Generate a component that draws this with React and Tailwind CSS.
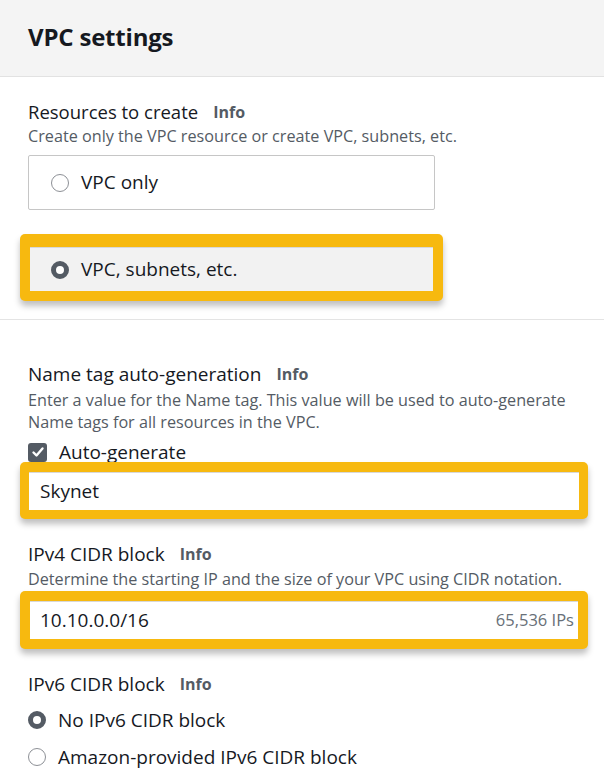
import React from "react";

const Info = () => (
  <span className="ml-[15px] text-[16px] font-bold text-[#545b64]">Info</span>
);

const Radio = ({ checked }) =>
  checked ? (
    <span className="inline-block w-[18px] h-[18px] rounded-full border-[5px] border-[#545b64] bg-white flex-shrink-0" />
  ) : (
    <span className="inline-block w-[18px] h-[18px] rounded-full border border-[#8d9096] bg-white flex-shrink-0" />
  );

const Highlight = ({ className, children }) => (
  <div
    className={`rounded-[5px] bg-[#f7b90f] shadow-[0_5px_6px_rgba(0,0,0,0.25)] ${className}`}
  >
    {children}
  </div>
);

export default function App() {
  return (
    <div
      className="w-[604px] h-[777px] bg-white overflow-hidden text-[#16191f]"
      style={{ fontFamily: '"Open Sans", "Noto Sans", sans-serif' }}
    >
      {/* Header */}
      <div className="h-[77px] bg-[#f4f4f4] border-b border-[#e2e2e2] flex items-center pl-[28px] pb-[2px]">
        <h2 className="text-[24px] font-bold tracking-[-0.2px]">VPC settings</h2>
      </div>

      {/* Resources to create */}
      <div className="pl-[28px] pt-[24px]">
        <div className="h-[22px] flex items-center text-[18.5px]">
          Resources to create <Info />
        </div>
        <p className="mt-[3px] text-[16.2px] leading-[20px] text-[#545b64] whitespace-nowrap">
          Create only the VPC resource or create VPC, subnets, etc.
        </p>
        <div className="mt-[9px] w-[407px] h-[55px] border border-[#c6c6c6] rounded-[2px] flex items-center pl-[22px] gap-[12px] text-[19px]">
          <Radio />
          VPC only
        </div>
      </div>
      <div className="pl-[20px] mt-[24px]">
        <Highlight className="w-[423px] h-[67px] pt-[13px] pb-[10px] px-[10px]">
          <div className="h-full bg-[#f2f2f2] flex items-center pl-[21px] gap-[12px] text-[19px] border-t border-[#d8d8d8]">
            <Radio checked />
            VPC, subnets, etc.
          </div>
        </Highlight>
      </div>

      <div className="mt-[18px] border-t border-[#e4e4e4]" />

      {/* Name tag */}
      <div className="pl-[28px] pt-[43px] pr-[10px]">
        <div className="h-[22px] flex items-center text-[19px]">
          Name tag auto-generation <Info />
        </div>
        <p className="mt-[4px] text-[16.2px] leading-[22px] text-[#545b64] whitespace-nowrap">
          Enter a value for the Name tag. This value will be used to auto-generate
          <br />
          Name tags for all resources in the VPC.
        </p>
        <div className="mt-[8px] h-[22px] flex items-center gap-[12px] text-[19px]">
          <span className="w-[19px] h-[19px] rounded-[3px] bg-[#545b64] flex items-center justify-center">
            <svg width="14" height="14" viewBox="0 0 14 14">
              <path d="M2.5 7.5 L5.5 10.5 L11.5 3.5" fill="none" stroke="white" strokeWidth="2.4" strokeLinecap="round" strokeLinejoin="round" />
            </svg>
          </span>
          Auto-generate
        </div>
      </div>
      <div className="pl-[20px] -mt-[1px] relative">
        <Highlight className="w-[568px] h-[57px] pt-[10px] pb-[9px] px-[9px]">
          <div className="h-full bg-white flex items-center pl-[11px] text-[19px] border-t border-[#d8d8d8]">
            Skynet
          </div>
        </Highlight>
      </div>

      {/* IPv4 */}
      <div className="pl-[28px] pt-[24px]">
        <div className="h-[22px] flex items-center text-[19px]">
          IPv4 CIDR block <Info />
        </div>
        <p className="mt-[4px] text-[16.2px] leading-[20px] text-[#545b64] whitespace-nowrap">
          Determine the starting IP and the size of your VPC using CIDR notation.
        </p>
      </div>
      <div className="pl-[20px] mt-[2px]">
        <Highlight className="w-[568px] h-[58px] pt-[10px] pb-[10px] px-[10px]">
          <div className="h-full bg-white flex items-center justify-between pl-[10px] pr-[4px] text-[19px] border-t border-[#d8d8d8]">
            <span>10.10.0.0/16</span>
            <span className="text-[16.5px] text-[#687078]">65,536 IPs</span>
          </div>
        </Highlight>
      </div>

      {/* IPv6 */}
      <div className="pl-[28px] pt-[24px]">
        <div className="h-[22px] flex items-center text-[19px]">
          IPv6 CIDR block <Info />
        </div>
        <div className="mt-[14px] flex flex-col gap-[15px] text-[19px]">
          <div className="h-[22px] flex items-center gap-[12px]">
            <Radio checked />
            No IPv6 CIDR block
          </div>
          <div className="h-[22px] flex items-center gap-[12px]">
            <Radio />
            Amazon-provided IPv6 CIDR block
          </div>
        </div>
      </div>
    </div>
  );
}
